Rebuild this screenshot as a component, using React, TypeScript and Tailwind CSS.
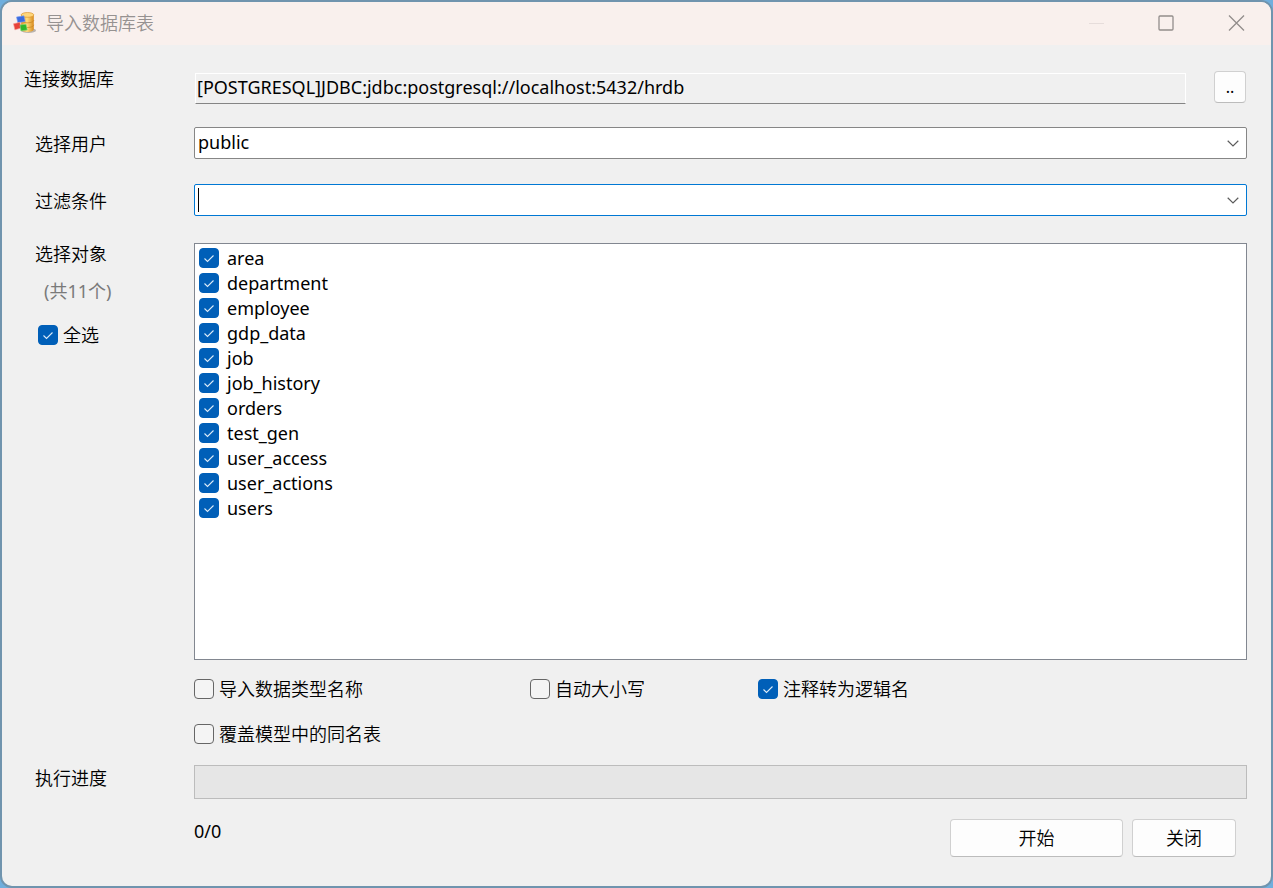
import React, { useState } from 'react';

const TABLES = [
  'area',
  'department',
  'employee',
  'gdp_data',
  'job',
  'job_history',
  'orders',
  'test_gen',
  'user_access',
  'user_actions',
  'users',
];

interface CheckProps {
  label: string;
  checked: boolean;
  onChange: (checked: boolean) => void;
  className?: string;
}

const Check: React.FC<CheckProps> = ({ label, checked, onChange, className = 'gap-[5px]' }) => (
  <label className={`flex w-fit items-center ${className}`}>
    <span className="grid size-5 shrink-0">
      <input
        type="checkbox"
        checked={checked}
        onChange={(e) => onChange(e.target.checked)}
        className="col-start-1 row-start-1 size-5 appearance-none rounded border border-[#666666] bg-[#f4f4f4] checked:border-[#005fb8] checked:bg-[#005fb8]"
      />
      {checked && (
        <svg
          viewBox="0 0 20 20"
          className="pointer-events-none col-start-1 row-start-1 size-5"
          fill="none"
          stroke="#dcebf8"
          strokeWidth="1.1"
        >
          <path d="M5.5 10.5 L8.5 13.5 L14.5 7.5" />
        </svg>
      )}
    </span>
    <span>{label}</span>
  </label>
);

const Chevron = () => (
  <svg width="12" height="7" viewBox="0 0 12 7" fill="none" stroke="#5c5c5c" strokeWidth="1.2">
    <path d="M0.7 0.8 L6 5.9 L11.3 0.8" />
  </svg>
);

const AppIcon = () => (
  <svg width="24" height="22" viewBox="0 0 24 22">
    <defs>
      <linearGradient id="gold" x1="0" x2="1">
        <stop offset="0" stopColor="#e0901c" />
        <stop offset="0.45" stopColor="#ffdc80" />
        <stop offset="1" stopColor="#d98a1c" />
      </linearGradient>
    </defs>
    <ellipse cx="15.5" cy="18.5" rx="7.5" ry="2.4" fill="#b9b3ae" />
    <path d="M8.2 3v14c0 1.7 2.8 3 6.3 3s6.3-1.3 6.3-3V3z" fill="url(#gold)" />
    <path d="M8.2 8c0 1.6 2.8 2.8 6.3 2.8s6.3-1.2 6.3-2.8M8.2 12.7c0 1.6 2.8 2.8 6.3 2.8s6.3-1.2 6.3-2.8" fill="none" stroke="#c98420" strokeWidth="0.7" />
    <ellipse cx="14.5" cy="2.9" rx="6.3" ry="2.4" fill="#ffd67a" stroke="#dc9630" strokeWidth="0.7" />
    <path d="M3.5 5l7.4-1.2 1.3 5.6-7.4 1.3z" fill="#3b6be0" stroke="#7d9ff0" strokeWidth="0.6" />
    <path d="M0.5 11.8l6.4-1.5 1.2 5.8-6.2 1.7z" fill="#e8423a" stroke="#f59a92" strokeWidth="0.6" />
    <path d="M7 13l6-0.8 1.3 5.8-6.4 0.9z" fill="#2fb62c" stroke="#8ade80" strokeWidth="0.6" />
  </svg>
);

const App: React.FC = () => {
  const [schema, setSchema] = useState('public');
  const [filter, setFilter] = useState('');
  const [selected, setSelected] = useState<string[]>(TABLES);
  const [importTypeName, setImportTypeName] = useState(false);
  const [autoCase, setAutoCase] = useState(false);
  const [commentAsName, setCommentAsName] = useState(true);
  const [overwrite, setOverwrite] = useState(false);

  const toggle = (name: string, on: boolean) =>
    setSelected(on ? [...selected, name] : selected.filter((t) => t !== name));

  return (
    <div className="flex min-h-screen flex-col bg-[#70aedd] font-['Noto_Sans','Noto_Sans_CJK_SC',sans-serif] text-lg leading-6 font-[350] text-black">
      <div className="flex flex-1 flex-col overflow-hidden rounded-xl border-2 border-[#7094ae] bg-[#f0f0f0]">
        {/* Title bar */}
        <header className="flex h-[43px] items-center bg-[#f9f0ed] pr-[26px] pb-0.5 pl-[11px] text-[#969291]">
          <AppIcon />
          <h1 className="ml-[9px] flex-1 font-[350]">导入数据库表</h1>
          <div className="flex items-center gap-[53px]">
            <button aria-label="最小化" disabled className="flex">
              <svg width="16" height="16" stroke="#e6dddb"><path d="M0 8.5H15" /></svg>
            </button>
            <button aria-label="最大化" className="flex">
              <svg width="16" height="16" fill="none" stroke="#928d8b" strokeWidth="1.3">
                <rect x="1" y="1" width="14" height="14" rx="1" />
              </svg>
            </button>
            <button aria-label="关闭窗口" className="flex">
              <svg width="18" height="16" fill="none" stroke="#928d8b" strokeWidth="1.3">
                <path d="M2 0.5L17 15.5M17 0.5L2 15.5" />
              </svg>
            </button>
          </div>
        </header>

        <main className="grid flex-1 grid-cols-[159px_minmax(0,1fr)] grid-rows-[56px_57px_59px_minmax(400px,1fr)_auto_34px_auto] pt-[26px] pr-6 pb-[29px] pl-[33px]">
          {/* Connection */}
          <label htmlFor="conn" className="-mt-1 -ml-[11px]">连接数据库</label>
          <div className="flex items-start justify-between pr-px">
            <input
              id="conn"
              readOnly
              value="[POSTGRESQL]JDBC:jdbc:postgresql://localhost:5432/hrdb"
              className="mt-0.5 mr-7 ml-px h-[31px] min-w-0 flex-1 border border-t-white border-r-white border-b-[#858585] border-l-white bg-[#f0f0f0] px-px pb-1 font-normal outline-none"
            />
            <button className="size-8 rounded border border-[#d0d0d0] border-b-[#bcbcbc] bg-[#fdfdfd] text-base font-normal">..</button>
          </div>

          <label htmlFor="schema" className="mt-[5px]">选择用户</label>
          <div className="grid h-8 items-center">
            <select
              id="schema"
              value={schema}
              onChange={(e) => setSchema(e.target.value)}
              className="col-start-1 row-start-1 h-8 appearance-none rounded-xs border border-[#868686] bg-white px-[3px] pb-0.5 font-normal outline-none"
            >
              <option value="public">public</option>
            </select>
            <span className="pointer-events-none col-start-1 row-start-1 mr-2 justify-self-end"><Chevron /></span>
          </div>

          <label htmlFor="filter" className="mt-[5px]">过滤条件</label>
          <div className="flex h-8 items-center rounded-xs border border-[#0078d4] bg-white pr-[7px] pl-[3px]">
            <span className="h-6 w-px bg-black" />
            <input
              id="filter"
              value={filter}
              onChange={(e) => setFilter(e.target.value)}
              className="min-w-0 flex-1 font-normal outline-none"
            />
            <button aria-label="展开"><Chevron /></button>
          </div>

          {/* Tables */}
          <div>
            <h2 className="-mt-px font-[350]">选择对象</h2>
            <p className="mt-[13px] ml-[9px] font-normal text-[#7a7a7a]">(共{TABLES.length}个)</p>
            <div className="mt-5 ml-[3px]">
              <Check
                label="全选"
                checked={selected.length === TABLES.length}
                onChange={(on) => setSelected(on ? TABLES : [])}
              />
            </div>
          </div>
          <ul className="border border-[#828790] bg-white px-1 py-px font-normal">
            {TABLES.map((name) => (
              <li key={name} className="flex h-[25px] items-center">
                <Check
                  label={name}
                  checked={selected.includes(name)}
                  onChange={(on) => toggle(name, on)}
                  className="gap-2"
                />
              </li>
            ))}
          </ul>

          {/* Options */}
          <div className="col-start-2 grid grid-cols-[336px_228px_1fr] gap-y-[21px] pt-[17px] pb-[19px]">
            <Check label="导入数据类型名称" checked={importTypeName} onChange={setImportTypeName} />
            <Check label="自动大小写" checked={autoCase} onChange={setAutoCase} />
            <Check label="注释转为逻辑名" checked={commentAsName} onChange={setCommentAsName} />
            <Check label="覆盖模型中的同名表" checked={overwrite} onChange={setOverwrite} />
          </div>

          {/* Progress */}
          <span className="mt-px">执行进度</span>
          <div role="progressbar" aria-label="执行进度" className="border border-[#bcbcbc] bg-[#e6e6e6]" />

          <div className="col-start-2 flex items-start pt-5 pr-[11px]">
            <span className="flex-1 font-normal">0/0</span>
            <div className="flex gap-[9px]">
              <button className="h-[38px] w-[173px] rounded border border-[#d0d0d0] border-b-[#bcbcbc] bg-[#fdfdfd]">开始</button>
              <button className="h-[38px] w-[104px] rounded border border-[#d0d0d0] border-b-[#bcbcbc] bg-[#fdfdfd]">关闭</button>
            </div>
          </div>
        </main>
      </div>
    </div>
  );
};

export default App;
